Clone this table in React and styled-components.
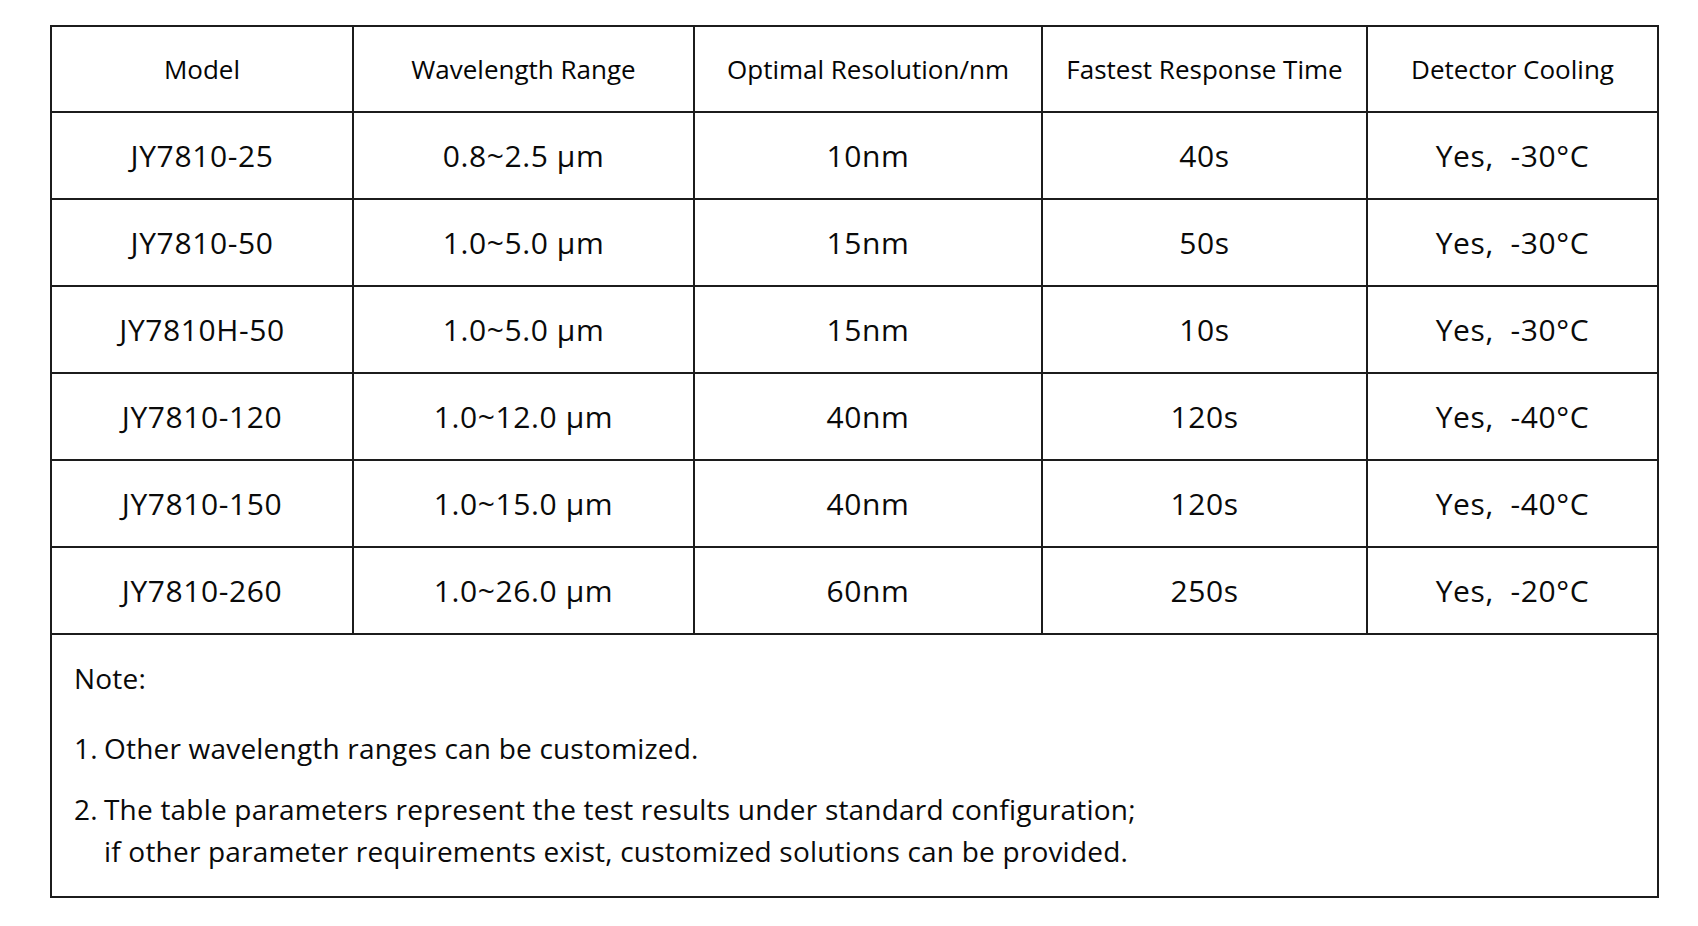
import React from "react";
import styled, { createGlobalStyle } from "styled-components";

const Global = createGlobalStyle`
  html, body { margin: 0; padding: 0; background: #ffffff; }
  body { font-family: "Open Sans", "Noto Sans", "Liberation Sans", sans-serif; color: #0a0a0a; }
`;

const Page = styled.div`
  padding: 25px 0 0 50px;
`;

const Table = styled.table`
  border-collapse: collapse;
  table-layout: fixed;
  width: 1609px;
`;

const HeadCell = styled.th`
  border: 2px solid #1c1c1c;
  height: 84px;
  padding: 0;
  font-weight: 500;
  font-size: 26px;
  letter-spacing: 0;
  text-align: center;
  vertical-align: middle;
  color: #050505;
`;

const Cell = styled.td`
  border: 2px solid #1c1c1c;
  height: 85px;
  padding: 0;
  font-size: 30px;
  letter-spacing: 0.6px;
  text-align: center;
  vertical-align: middle;
  white-space: pre;
  color: #0a0a0a;
`;

const NoteCell = styled.td`
  border: 2px solid #1c1c1c;
  padding: 22px 22px 24px 22px;
  font-size: 28px;
  letter-spacing: 0.2px;
  line-height: 42px;
  color: #0a0a0a;
  vertical-align: top;
`;

const NoteTitle = styled.div`
  margin-bottom: 28px;
`;

const NoteList = styled.ol`
  margin: 0;
  padding: 0;
  list-style: none;
  display: flex;
  flex-direction: column;
  gap: 19px;
`;

const NoteItem = styled.li`
  display: flex;
`;

const Num = styled.span`
  flex: 0 0 auto;
  width: 30px;
`;

const columns = [302, 341, 348, 325, 291];
const headers = [
  "Model",
  "Wavelength Range",
  "Optimal Resolution/nm",
  "Fastest Response Time",
  "Detector Cooling",
];
const rows = [
  ["JY7810-25", "0.8~2.5 μm", "10nm", "40s", "Yes,  -30°C"],
  ["JY7810-50", "1.0~5.0 μm", "15nm", "50s", "Yes,  -30°C"],
  ["JY7810H-50", "1.0~5.0 μm", "15nm", "10s", "Yes,  -30°C"],
  ["JY7810-120", "1.0~12.0 μm", "40nm", "120s", "Yes,  -40°C"],
  ["JY7810-150", "1.0~15.0 μm", "40nm", "120s", "Yes,  -40°C"],
  ["JY7810-260", "1.0~26.0 μm", "60nm", "250s", "Yes,  -20°C"],
];

export default function App() {
  return (
    <>
      <Global />
      <Page>
        <Table>
          <colgroup>
            {columns.map((w, i) => (
              <col key={i} style={{ width: w }} />
            ))}
          </colgroup>
          <thead>
            <tr>
              {headers.map((h) => (
                <HeadCell key={h}>{h}</HeadCell>
              ))}
            </tr>
          </thead>
          <tbody>
            {rows.map((r) => (
              <tr key={r[0]}>
                {r.map((c, i) => (
                  <Cell key={i}>{c}</Cell>
                ))}
              </tr>
            ))}
            <tr>
              <NoteCell colSpan={5}>
                <NoteTitle>Note:</NoteTitle>
                <NoteList>
                  <NoteItem>
                    <Num>1.</Num>
                    <span>Other wavelength ranges can be customized.</span>
                  </NoteItem>
                  <NoteItem>
                    <Num>2.</Num>
                    <span>
                      The table parameters represent the test results under standard configuration;
                      <br />
                      if other parameter requirements exist, customized solutions can be provided.
                    </span>
                  </NoteItem>
                </NoteList>
              </NoteCell>
            </tr>
          </tbody>
        </Table>
      </Page>
    </>
  );
}
